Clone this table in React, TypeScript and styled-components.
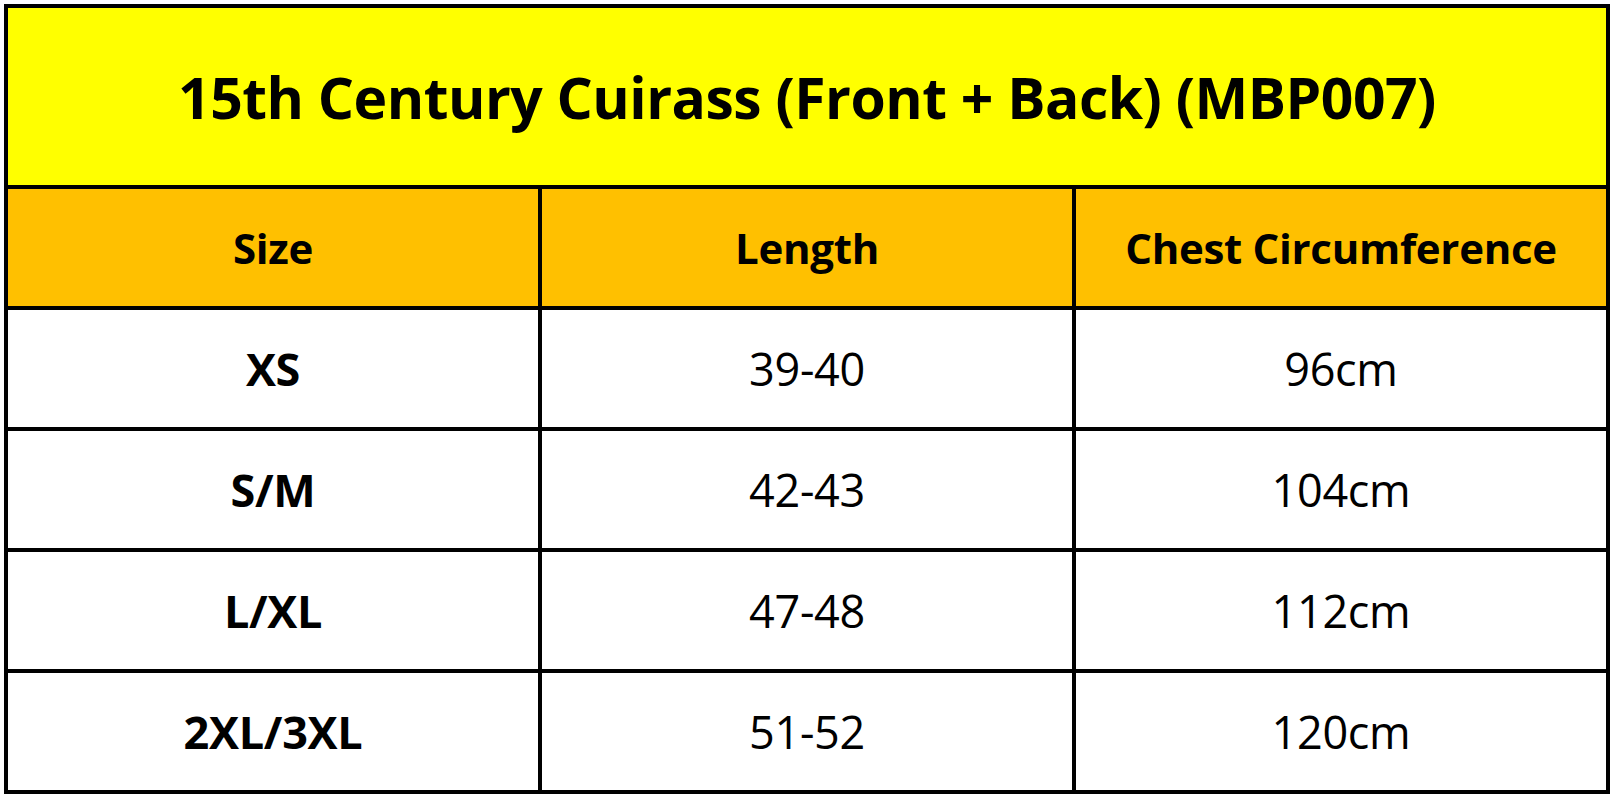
import React from "react";
import styled, { createGlobalStyle } from "styled-components";

const GlobalStyle = createGlobalStyle`
  html, body {
    margin: 0;
    padding: 0;
    background: #ffffff;
  }
  body {
    padding: 4px;
    font-family: "Open Sans", "Liberation Sans", sans-serif;
    color: #000;
  }
`;

const Chart = styled.div`
  display: grid;
  grid-template-columns: repeat(3, 530px);
  grid-template-rows: 177px repeat(5, 117px);
  gap: 4px;
  width: max-content;
  background: #000;
  border: 4px solid #000;
`;

const Title = styled.div`
  grid-column: 1 / -1;
  background: #ffff00;
  display: flex;
  align-items: center;
  justify-content: center;
  font-size: 57px;
  font-weight: 700;
  letter-spacing: -0.5px;
`;

const Cell = styled.div<{ $head?: boolean; $bold?: boolean }>`
  background: ${(p) => (p.$head ? "#ffc000" : "#ffffff")};
  display: flex;
  align-items: center;
  justify-content: center;
  font-size: ${(p) => (p.$head ? "42px" : "45px")};
  font-weight: ${(p) => (p.$head || p.$bold ? 700 : 400)};
  letter-spacing: -0.3px;
`;

const rows = [
  { size: "XS", length: "39-40", chest: "96cm" },
  { size: "S/M", length: "42-43", chest: "104cm" },
  { size: "L/XL", length: "47-48", chest: "112cm" },
  { size: "2XL/3XL", length: "51-52", chest: "120cm" },
];

export default function App() {
  return (
    <>
      <GlobalStyle />
      <Chart>
        <Title>15th Century Cuirass (Front + Back) (MBP007)</Title>
        <Cell $head>Size</Cell>
        <Cell $head>Length</Cell>
        <Cell $head>Chest Circumference</Cell>
        {rows.map((r) => (
          <React.Fragment key={r.size}>
            <Cell $bold>{r.size}</Cell>
            <Cell>{r.length}</Cell>
            <Cell>{r.chest}</Cell>
          </React.Fragment>
        ))}
      </Chart>
    </>
  );
}
